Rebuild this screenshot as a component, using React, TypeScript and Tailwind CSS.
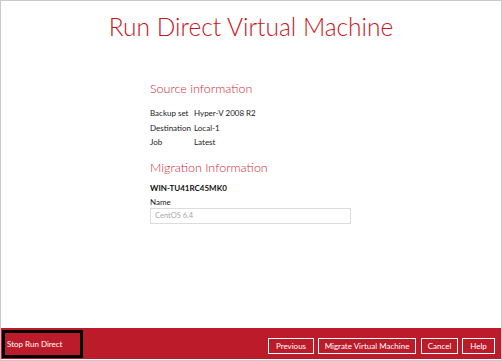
export default function App() {
  const rows: [string, string][] = [
    ['Backup set', 'Hyper-V 2008 R2'],
    ['Destination', 'Local-1'],
    ['Job', 'Latest'],
  ];

  return (
    <div className="flex h-[361px] w-[502px] flex-col border border-[#c9c9c9] bg-white font-['Lato',sans-serif]">
      <main className="flex-1">
        <h1 className="pt-[11px] text-center text-[24.5px] font-light leading-[30px] text-[#c8161e]">
          Run Direct Virtual Machine
        </h1>

        <div className="ml-[149px] mt-[38px] w-[201px]">
          <h2 className="text-[12.5px] font-light leading-[18px] text-[#cf2a36]">Source information</h2>
          <div className="mt-[8px] grid grid-cols-[44px_1fr] text-[8px] leading-[14.5px] text-[#1a1a1a]">
            {rows.map(([k, v]) => (
              <div key={k} className="contents">
                <span>{k}</span>
                <span>{v}</span>
              </div>
            ))}
          </div>

          <h2 className="mt-[9px] text-[12.5px] font-light leading-[18px] text-[#cf2a36]">Migration Information</h2>
          <p className="mt-[5px] text-[8px] font-bold leading-[12px] text-[#111]">WIN-TU41RC45MK0</p>
          <p className="mt-[2px] text-[8px] leading-[12px] text-[#1a1a1a]">Name</p>
          <input
            type="text"
            placeholder="CentOS 6.4"
            className="block h-[16px] w-full border border-[#dcdcdc] px-[4px] text-[7.5px] outline-none placeholder:text-[#a8a8a8]"
          />
        </div>
      </main>

      <footer className="mb-px flex h-[31px] items-start justify-between bg-[#bc1c29] text-[8px] text-white">
        <div className="mt-[2px] ml-[1px] flex h-[28px] w-[81px] items-center border-[3px] border-black pl-[2px]">
          Stop Run Direct
        </div>
        <div className="mt-[10px] mr-[6px] flex">
          <button className="h-[16px] w-[46px] border border-white leading-[14px] text-white">Previous</button>
          <button className="ml-[4px] h-[16px] w-[98px] border border-white leading-[14px] text-white">
            Migrate Virtual Machine
          </button>
          <button className="ml-[5px] h-[16px] w-[37px] border border-white leading-[14px] text-white">Cancel</button>
          <button className="ml-[4px] h-[16px] w-[33px] border border-white leading-[14px] text-white">Help</button>
        </div>
      </footer>
    </div>
  );
}
